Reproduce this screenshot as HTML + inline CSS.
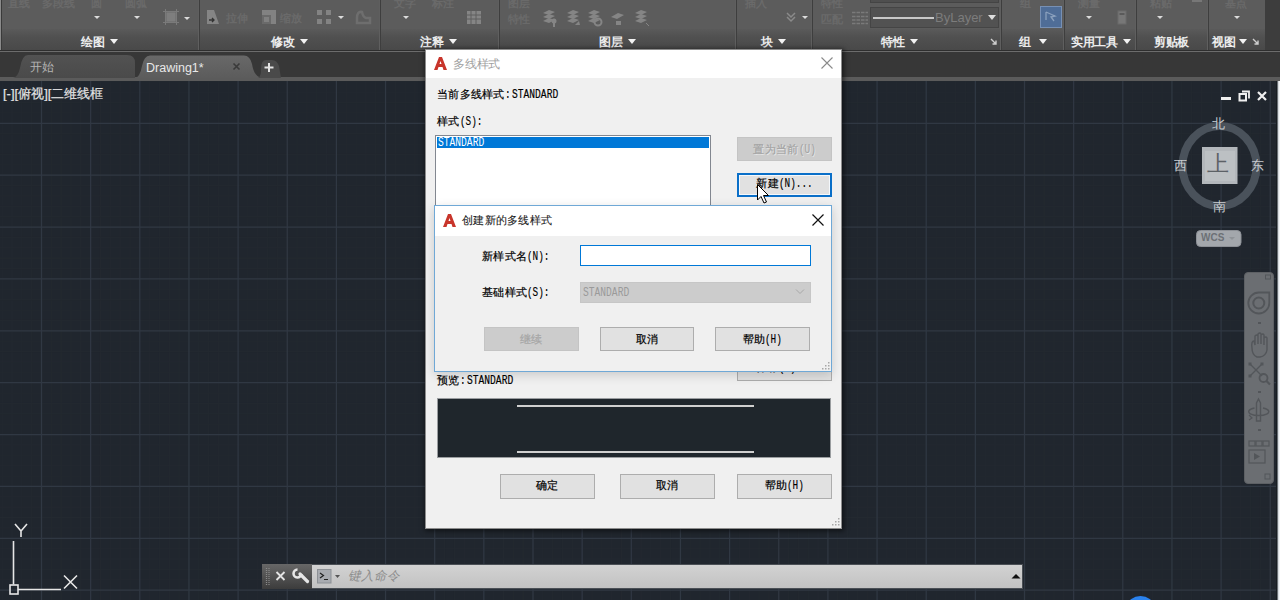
<!DOCTYPE html>
<html><head><meta charset="utf-8">
<style>
*{margin:0;padding:0;box-sizing:border-box}
html,body{width:1280px;height:600px;overflow:hidden;background:#20262e;font-family:"Liberation Sans",sans-serif}
div,span,svg{position:absolute}
.sep{top:0;width:2px;height:50px;border-left:1px solid #5f5f5f;border-right:1px solid #3e3e3e}
.pt{top:35px;font-size:12px;line-height:14px;color:#ededed;white-space:nowrap;font-weight:bold;letter-spacing:-0.5px}
.tri{width:0;height:0;border-left:4px solid transparent;border-right:4px solid transparent;border-top:5px solid #f2f2f2}
.stri{width:0;height:0;border-left:3px solid transparent;border-right:3px solid transparent;border-top:3px solid #dcdcdc}
.ft{font-size:11px;line-height:12px;color:#6a6a6a;white-space:nowrap;font-weight:bold}
.txt{font-size:11px;letter-spacing:0.3px;line-height:12px;color:#000;white-space:nowrap;-webkit-text-stroke:0.2px currentColor}
.m{position:static;display:inline-block;font-family:"Liberation Mono",monospace;font-size:13px;transform:scaleX(0.72);transform-origin:0 50%;-webkit-text-stroke:0.15px currentColor;letter-spacing:0}
.btn{background:#e1e1e1;border:1px solid #adadad;font-size:11px;letter-spacing:0.3px;line-height:22px;text-align:center;color:#000;white-space:nowrap;-webkit-text-stroke:0.2px currentColor}
.dis{background:#cccccc;border:1px solid #c4c4c4;color:#a6a6a6}
.mono{font-family:"Liberation Mono",monospace}
.ss{position:static;display:inline-block;font-family:"Liberation Mono",monospace;font-size:13px;transform:scaleX(0.74);transform-origin:0 50%;letter-spacing:0}
.ssn{position:static;font-family:"Liberation Mono",monospace;font-size:12.5px;letter-spacing:-1.6px}
</style></head><body>
<!-- RIBBON -->
<div style="left:0;top:0;width:1280px;height:52px;background:#3d3d3d"></div>
<div style="left:0;top:0;width:1265px;height:50px;background:#5c5c5c"></div>
<div style="left:0;top:29px;width:1265px;height:21px;background:linear-gradient(#5a5a5a,#505050 40%,#494949)"></div>
<div style="left:0;top:0;width:1px;height:51px;background:#8a8a8a"></div><div style="left:1px;top:0;width:1px;height:50px;background:#3a3a3a"></div>
<div style="left:0;top:50px;width:1280px;height:1px;background:#2e2e2e"></div>
<div style="left:0;top:51px;width:1280px;height:1px;background:#6c6c6c"></div>
<div class="sep" style="left:198px"></div>
<div class="sep" style="left:379px"></div>
<div class="sep" style="left:498px"></div>
<div class="sep" style="left:735px"></div>
<div class="sep" style="left:811px"></div>
<div class="sep" style="left:1000px"></div>
<div class="sep" style="left:1063px"></div>
<div class="sep" style="left:1135px"></div>
<div class="sep" style="left:1207px"></div>
<!-- panel titles -->
<span class="pt" style="left:81px">绘图</span><div class="tri" style="left:110px;top:39px"></div>
<span class="pt" style="left:271px">修改</span><div class="tri" style="left:300px;top:39px"></div>
<span class="pt" style="left:420px">注释</span><div class="tri" style="left:449px;top:39px"></div>
<span class="pt" style="left:599px">图层</span><div class="tri" style="left:628px;top:39px"></div>
<span class="pt" style="left:761px">块</span><div class="tri" style="left:778px;top:39px"></div>
<span class="pt" style="left:881px">特性</span><div class="tri" style="left:910px;top:39px"></div>
<span class="pt" style="left:1019px">组</span><div class="tri" style="left:1039px;top:39px"></div>
<span class="pt" style="left:1071px">实用工具</span><div class="tri" style="left:1123px;top:39px"></div>
<span class="pt" style="left:1154px">剪贴板</span>
<span class="pt" style="left:1212px">视图</span><div class="tri" style="left:1239px;top:39px"></div>
<svg style="left:990px;top:38px" width="8" height="8"><path d="M1 1L6 6M6 2.5V6H2.5" stroke="#cfcfcf" stroke-width="1.4" fill="none"/></svg>
<svg style="left:1252px;top:38px" width="8" height="8"><path d="M1 1L6 6M6 2.5V6H2.5" stroke="#cfcfcf" stroke-width="1.4" fill="none"/></svg>
<!-- faint ribbon icons -->
<span class="ft" style="left:8px;top:-3px">直线</span>
<span class="ft" style="left:42px;top:-3px">多段线</span>
<span class="ft" style="left:91px;top:-3px">圆</span>
<span class="ft" style="left:125px;top:-3px">圆弧</span>
<div class="stri" style="left:94px;top:16px"></div>
<div class="stri" style="left:134px;top:16px"></div>
<div class="stri" style="left:184px;top:17px"></div>
<svg style="left:162px;top:8px" width="18" height="18"><rect x="4" y="4" width="10" height="10" fill="#7e7e7e" stroke="#6a6a6a" stroke-width="1"/><path d="M1 3.5H17M1 14.5H17M3.5 1V17M14.5 1V17" stroke="#7a7a7a" stroke-width="1"/></svg>
<svg style="left:205px;top:9px" width="16" height="16"><path d="M2 1H9L14 15H2Z" fill="#858585"/><path d="M4 11H9M7 9L9 11L7 13" stroke="#333" stroke-width="1.3" fill="none"/></svg>
<span class="ft" style="left:226px;top:12px">拉伸</span>
<svg style="left:261px;top:9px" width="16" height="16"><path d="M1 1H15V15H1Z" fill="#828282"/><path d="M1 6H10V15H1Z" fill="#6a6a6a"/><path d="M3 8H8V13H3Z" fill="#808080"/></svg>
<span class="ft" style="left:280px;top:12px">缩放</span>
<svg style="left:316px;top:9px" width="16" height="16"><rect x="1" y="1" width="5" height="5" fill="#838383"/><rect x="10" y="1" width="5" height="5" fill="#838383"/><rect x="1" y="10" width="5" height="5" fill="#838383"/><rect x="10" y="10" width="5" height="5" fill="#838383"/></svg>
<div class="stri" style="left:338px;top:16px"></div>
<svg style="left:354px;top:9px" width="18" height="16"><path d="M3 14V9Q3 2 8 3Q9 8 12 9H16V14Z" fill="none" stroke="#6e6e6e" stroke-width="2.5"/></svg>
<span class="ft" style="left:394px;top:-3px">文字</span>
<div class="stri" style="left:403px;top:16px"></div>
<span class="ft" style="left:432px;top:-3px">标注</span>
<svg style="left:466px;top:10px" width="16" height="15"><rect x="1" y="1" width="14" height="13" fill="#858585"/><path d="M1 5H15M1 9H15M5 1V14M10 1V14" stroke="#5e5e5e" stroke-width="1"/></svg>
<span class="ft" style="left:508px;top:-5px;line-height:16px">图层<br>特性</span>
<svg style="left:540px;top:9px" width="140" height="18" fill="#858585"><path d="M3 4L9 1L15 3L9 6Z"/><path d="M3 8L9 5L15 7L9 10Z"/><path d="M3 12L9 9L15 11L9 14Z"/><circle cx="14" cy="12" r="2.5"/><rect x="13" y="13" width="2" height="5"/><path d="M27 4L33 1L39 3L33 6Z"/><path d="M27 8L33 5L39 7L33 10Z"/><path d="M27 12L33 9L39 11L33 14Z"/><path d="M35 16L39 12L40 16Z"/><path d="M48 4L54 1L60 3L54 6Z"/><path d="M48 8L54 5L60 7L54 10Z"/><path d="M48 12L54 9L60 11L54 14Z"/><circle cx="58" cy="13" r="3.5" fill="none" stroke="#858585" stroke-width="2"/><path d="M71 8L78 4L84 6L77 10Z"/><rect x="76" y="12" width="5" height="4"/><path d="M95 4L101 1L107 3L101 6Z"/><path d="M95 8L101 5L107 7L101 10Z"/><path d="M95 12L101 9L107 11L101 14Z"/><path d="M106 14L109 17" stroke="#858585"/></svg>
<span class="ft" style="left:745px;top:-3px">插入</span>
<svg style="left:786px;top:11px" width="10" height="12"><path d="M1 2L5 6L9 2M1 6L5 10L9 6" stroke="#8a8a8a" stroke-width="1.5" fill="none"/></svg>
<div class="stri" style="left:802px;top:16px"></div>
<span class="ft" style="left:821px;top:-5px;line-height:16px">特性<br>匹配</span>
<svg style="left:851px;top:11px" width="18" height="14"><path d="M1 1.5H17M1 5.5H17M1 9H17M1 12.5H17" stroke="#7a7a7a" stroke-width="1.4" stroke-dasharray="3.5 1"/></svg>
<div style="left:870px;top:-2px;width:129px;height:5px;background:#4f4f4f;border:1px solid #444"></div>
<div style="left:870px;top:7px;width:129px;height:21px;background:#525252;border:1px solid #454545"></div>
<div style="left:873px;top:17px;width:61px;height:2px;background:#c8c8c8"></div>
<span style="left:935px;top:11px;font-size:13px;line-height:14px;color:#7c7c7c;white-space:nowrap">ByLayer</span>
<div class="tri" style="left:988px;top:15px;border-top-color:#ddd"></div>
<span class="ft" style="left:1020px;top:-3px">组</span>
<div style="left:1040px;top:6px;width:22px;height:22px;background:#4f6d97;border:1px solid #7790b4"></div>
<svg style="left:1044px;top:10px" width="14" height="14"><path d="M2 2L11 6L7 7L10 11M2 2V10" stroke="#8aa0bd" stroke-width="1.3" fill="none"/></svg>
<span class="ft" style="left:1078px;top:-3px">测量</span>
<div class="stri" style="left:1086px;top:16px"></div>
<svg style="left:1117px;top:10px" width="10" height="15"><rect x="1" y="1" width="8" height="13" fill="#777" stroke="#6a6a6a"/><rect x="2.5" y="3" width="5" height="2" fill="#5a5a5a"/></svg>
<span class="ft" style="left:1150px;top:-3px">粘贴</span>
<div class="stri" style="left:1157px;top:16px"></div>
<div style="left:1192px;top:0px;width:10px;height:2px;background:#777"></div>
<span class="ft" style="left:1225px;top:-3px">基点</span>
<div class="stri" style="left:1234px;top:16px"></div>
<!-- TAB BAR -->
<div style="left:0;top:52px;width:1280px;height:29px;background:#373737"></div>
<div style="left:0;top:77px;width:1280px;height:4px;background:#5b5b5b"></div>
<svg style="left:0;top:52px" width="300" height="29">
  <defs>
    <linearGradient id="tg1" x1="0" y1="0" x2="0" y2="1"><stop offset="0" stop-color="#525252"/><stop offset="1" stop-color="#4a4a4a"/></linearGradient>
    <linearGradient id="tg2" x1="0" y1="0" x2="0" y2="1"><stop offset="0" stop-color="#686868"/><stop offset="1" stop-color="#5c5c5c"/></linearGradient>
  </defs>
  <path d="M13 26Q18 25 20 16Q22 3 28 3H127Q135 3 135 11V26Z" fill="url(#tg1)"/>
  <path d="M135 26Q140 25 142 14Q144 3.5 150 3.5H244Q250 3.5 252 12Q254 25 262 26Z" fill="url(#tg2)"/>
  <path d="M258 26Q261 25 261 17Q261 8 266 8H272Q277 8 279 14L281 26Z" fill="#4a4a4a"/>
  <path d="M269 11V20M264.5 15.5H273.5" stroke="#e4e4e4" stroke-width="2"/>
  <path d="M233.5 11.5L239.5 17.5M239.5 11.5L233.5 17.5" stroke="#3a3a3a" stroke-width="1.6"/>
</svg>
<span style="left:30px;top:60px;font-size:12px;line-height:14px;color:#b4b4b4;white-space:nowrap">开始</span>
<span style="left:146px;top:60px;font-size:12.5px;line-height:16px;color:#e8e8e8;white-space:nowrap">Drawing1*</span>
<!-- DRAWING AREA -->
<svg style="left:0;top:81px" width="1280" height="519">
<path d="M2.18 0V519M12.01 0V519M21.84 0V519M31.67 0V519M51.33 0V519M61.16 0V519M70.99 0V519M80.82 0V519M100.48 0V519M110.31 0V519M120.14 0V519M129.97 0V519M149.63 0V519M159.46 0V519M169.29 0V519M179.12 0V519M198.78 0V519M208.61 0V519M218.44 0V519M228.27 0V519M247.93 0V519M257.76 0V519M267.59 0V519M277.42 0V519M297.08 0V519M306.91 0V519M316.74 0V519M326.57 0V519M346.23 0V519M356.06 0V519M365.89 0V519M375.72 0V519M395.38 0V519M405.21 0V519M415.04 0V519M424.87 0V519M444.53 0V519M454.36 0V519M464.19 0V519M474.02 0V519M493.68 0V519M503.51 0V519M513.34 0V519M523.17 0V519M542.83 0V519M552.66 0V519M562.49 0V519M572.32 0V519M591.98 0V519M601.81 0V519M611.64 0V519M621.47 0V519M641.13 0V519M650.96 0V519M660.79 0V519M670.62 0V519M690.28 0V519M700.11 0V519M709.94 0V519M719.77 0V519M739.43 0V519M749.26 0V519M759.09 0V519M768.92 0V519M788.58 0V519M798.41 0V519M808.24 0V519M818.07 0V519M837.73 0V519M847.56 0V519M857.39 0V519M867.22 0V519M886.88 0V519M896.71 0V519M906.54 0V519M916.37 0V519M936.03 0V519M945.86 0V519M955.69 0V519M965.52 0V519M985.18 0V519M995.01 0V519M1004.84 0V519M1014.67 0V519M1034.33 0V519M1044.16 0V519M1053.99 0V519M1063.82 0V519M1083.48 0V519M1093.31 0V519M1103.14 0V519M1112.97 0V519M1132.63 0V519M1142.46 0V519M1152.29 0V519M1162.12 0V519M1181.78 0V519M1191.61 0V519M1201.44 0V519M1211.27 0V519M1230.93 0V519M1240.76 0V519M1250.59 0V519M1260.42 0V519M1280.08 0V519M0 0.80H1280M0 11.18H1280M0 21.55H1280M0 31.93H1280M0 52.67H1280M0 63.05H1280M0 73.42H1280M0 83.80H1280M0 104.54H1280M0 114.92H1280M0 125.29H1280M0 135.67H1280M0 156.41H1280M0 166.79H1280M0 177.16H1280M0 187.54H1280M0 208.28H1280M0 218.66H1280M0 229.03H1280M0 239.41H1280M0 260.15H1280M0 270.53H1280M0 280.90H1280M0 291.28H1280M0 312.02H1280M0 322.40H1280M0 332.77H1280M0 343.15H1280M0 363.89H1280M0 374.27H1280M0 384.64H1280M0 395.02H1280M0 415.76H1280M0 426.14H1280M0 436.51H1280M0 446.89H1280M0 467.63H1280M0 478.01H1280M0 488.38H1280M0 498.76H1280M0 519.50H1280" stroke="#232930" stroke-width="1"/>
<path d="M41.50 0V519M90.65 0V519M139.80 0V519M188.95 0V519M238.10 0V519M287.25 0V519M336.40 0V519M385.55 0V519M434.70 0V519M483.85 0V519M533.00 0V519M582.15 0V519M631.30 0V519M680.45 0V519M729.60 0V519M778.75 0V519M827.90 0V519M877.05 0V519M926.20 0V519M975.35 0V519M1024.50 0V519M1073.65 0V519M1122.80 0V519M1171.95 0V519M1221.10 0V519M1270.25 0V519M0 42.30H1280M0 94.17H1280M0 146.04H1280M0 197.91H1280M0 249.78H1280M0 301.65H1280M0 353.52H1280M0 405.39H1280M0 457.26H1280M0 509.13H1280" stroke="#303843" stroke-width="1.25"/>
</svg>
<div style="left:1276px;top:81px;width:4px;height:519px;background:linear-gradient(to right,#181d22 0,#181d22 25%,#9aa2a8 45%,#f2f5f8 70%)"></div>
<span style="left:3px;top:87px;font-size:13px;line-height:14px;color:#e4e4e4;white-space:nowrap;-webkit-text-stroke:0.2px #e4e4e4">[-][俯视][二维线框</span>
<!-- window controls -->
<div style="left:1221px;top:97px;width:10px;height:3px;background:#f0f0f0"></div>
<svg style="left:1238px;top:90px" width="13" height="12"><path d="M4 1.5H11V8.5" stroke="#f0f0f0" stroke-width="1.8" fill="none"/><rect x="1.5" y="4" width="6.5" height="6.5" stroke="#f0f0f0" stroke-width="2" fill="none"/></svg>
<svg style="left:1256px;top:90px" width="12" height="12"><path d="M2 2L10 10M10 2L2 10" stroke="#f0f0f0" stroke-width="2.2"/></svg>
<!-- viewcube -->
<svg style="left:1170px;top:115px" width="100" height="140">
  <ellipse cx="49.5" cy="51" rx="37" ry="40" fill="none" stroke="#4a525b" stroke-width="8"/>
  <rect x="32" y="32" width="35.5" height="37" fill="#b3b7bb"/>
  <rect x="35" y="36" width="30" height="30" fill="#bcc0c3"/>
  <rect x="26.5" y="115.5" width="44.5" height="16" rx="4" fill="#a3a7ac" stroke="#8c9096"/>
</svg>
<span style="left:1212px;top:117px;font-size:13px;line-height:14px;color:#c8ccd0">北</span>
<span style="left:1213px;top:200px;font-size:13px;line-height:14px;color:#c8ccd0">南</span>
<span style="left:1174px;top:159px;font-size:13px;line-height:14px;color:#c8ccd0">西</span>
<span style="left:1251px;top:159px;font-size:13px;line-height:14px;color:#c8ccd0">东</span>
<span style="left:1207px;top:152px;font-size:22px;line-height:24px;color:#5c6166">上</span>
<span style="left:1201px;top:232px;font-size:10px;line-height:12px;color:#6c7075;font-weight:bold">WCS</span>
<div class="stri" style="left:1229px;top:237px;border-top-color:#8f9398"></div>
<!-- nav bar -->
<div style="left:1244px;top:272px;width:30px;height:212px;background:#6b6e72;border-radius:4px;border:1px solid #5d6064"></div>
<svg style="left:1244px;top:272px" width="31" height="212" fill="none" stroke="#53565a" stroke-width="1.6">
  <rect x="21.5" y="3" width="5" height="4" stroke-width="1"/>
  <path d="M14.8 20.5H25.3V31A10.5 10.5 0 1 1 14.8 20.5Z" stroke-width="1.8"/>
  <circle cx="14.8" cy="31" r="5.5" stroke-width="2"/>
  <path d="M14 51H17" stroke-width="2"/>
  <path d="M8 76Q7 69 10 69L11 73V64Q13 62 14 64V72V62Q16 60 17 62V72V63Q19 61 20 63V73V66Q22 64 23 66V78Q22 84 16 85H13Q8 83 8 76Z" stroke-width="1.4"/>
  <path d="M6 92L18 104M18 92L6 104" stroke-width="1.4"/>
  <rect x="4.5" y="90.5" width="3" height="3" fill="#53565a" stroke="none"/><rect x="16.5" y="90.5" width="3" height="3" fill="#53565a" stroke="none"/><rect x="4.5" y="102.5" width="3" height="3" fill="#53565a" stroke="none"/>
  <circle cx="19.5" cy="106" r="4" stroke-width="1.8"/>
  <path d="M22.5 109L26 112.5" stroke-width="2.2"/>
  <path d="M14 120H17" stroke-width="2"/>
  <path d="M12.5 149V131L14.5 127L16.5 131V149Z" stroke-width="1.4"/>
  <path d="M10.5 136A10 4 0 1 0 19 136" stroke-width="1.5"/>
  <path d="M5 143L8 146L5 148" stroke-width="1.2"/>
  <path d="M14 158H17" stroke-width="2"/>
  <rect x="5" y="169" width="6" height="5" stroke-width="1.2"/>
  <rect x="12" y="169" width="6" height="5" stroke-width="1.2"/>
  <rect x="19" y="169" width="6" height="5" stroke-width="1.2"/>
  <rect x="5" y="178" width="16" height="13" stroke-width="1.2"/>
  <path d="M10 181V188L16 184.5Z" fill="#53565a" stroke="none"/>
  <rect x="21" y="202" width="5" height="5" stroke-width="1"/>
</svg>
<!-- UCS -->
<svg style="left:0;top:515px" width="90" height="85" fill="none" stroke="#e6e6e6" stroke-width="1.6">
  <path d="M15 9L21 16L27 9M21 16V22"/>
  <path d="M13.5 26V69.5"/>
  <rect x="10" y="70" width="8" height="9"/>
  <path d="M18 74.5H61"/>
  <path d="M64 60.5L77 73.5M77 60.5L64 73.5"/>
</svg>
<!-- command line -->
<div style="left:262px;top:564px;width:761px;height:25px;background:linear-gradient(#d2d2d2,#c2c2c2);border:1px solid #4a4f55"></div>
<div style="left:262px;top:564px;width:50px;height:25px;background:linear-gradient(#676767,#3c3c3c)"></div>
<svg style="left:262px;top:564px" width="140" height="25">
  <path d="M4.5 4V21M7 4V21" stroke="#8a8a8a" stroke-width="1.2" stroke-dasharray="1 1"/>
  <path d="M14.5 8L22.5 16M22.5 8L14.5 16" stroke="#e4e4e4" stroke-width="1.8"/>
  <path d="M35.5 5.5A4 4 0 1 0 39.5 10" stroke="#e6e6e6" stroke-width="2.6" fill="none"/><path d="M38 10L45.5 17.5" stroke="#e6e6e6" stroke-width="3.2" stroke-linecap="round"/>
  <rect x="55.5" y="5.5" width="13.5" height="13.5" fill="#a8abb0" stroke="#8d9196"/>
  <path d="M58 9L61.5 11.5L58 14M62 15.5H66" stroke="#222" stroke-width="1.2" fill="none"/>
  <path d="M73 11H78L75.5 14Z" fill="#555"/>
</svg>
<span style="left:348px;top:569px;font-size:12.5px;line-height:14px;color:#8c8c8c;font-style:italic;white-space:nowrap">键入命令</span>
<svg style="left:1010px;top:572px" width="12" height="8"><path d="M1.5 6.5H10.5L6 2Z" fill="#111"/></svg>
<!-- blue circle bottom -->
<svg style="left:1120px;top:590px" width="40" height="10"><ellipse cx="20.5" cy="16" rx="13" ry="10" fill="#2a82ee"/></svg>
<!-- DIALOG 1 -->
<div style="left:425px;top:49px;width:417px;height:480px;box-shadow:1px 1px 5px 1px rgba(0,0,0,0.55)"></div>
<div style="left:425px;top:49px;width:417px;height:480px;background:#f0f0f0;border:1px solid #8d8d8d"></div>
<div style="left:426px;top:50px;width:415px;height:28px;background:#ffffff"></div>
<svg style="left:433px;top:56px" width="15" height="15"><path d="M1 14L6 1H9L14 14H10.5L9.5 11H5.5L4.5 14Z M6.5 8H8.5L7.5 5Z" fill="#c8352b" fill-rule="evenodd"/></svg>
<span class="txt" style="left:453px;top:58px;color:#a0a0a0;-webkit-text-stroke:0;font-size:12px;letter-spacing:-0.2px">多线样式</span>
<svg style="left:820px;top:56px" width="14" height="14"><path d="M1.5 1.5L12.5 12.5M12.5 1.5L1.5 12.5" stroke="#8a8a8a" stroke-width="1.1"/></svg>
<span class="txt" style="left:437px;top:88px">当前多线样式<span class="m" style="margin-right:-1.2px;margin-left:0.5px">:</span><span class="ss">STANDARD</span></span>
<span class="txt" style="left:437px;top:115px">样式<span class="m" style="margin-right:-8.8px">(S):</span></span>
<div style="left:435px;top:135px;width:276px;height:90px;background:#fff;border:1px solid #828790"></div>
<div style="left:437px;top:137px;width:272px;height:11px;background:#0078d7"></div>
<span class="ss" style="position:absolute;left:438px;top:136px;line-height:13px;color:#fff">STANDARD</span>
<div class="btn dis" style="left:737px;top:137px;width:95px;height:24px;color:#a4a4a4;text-shadow:1px 1px 0 #e8e8e8">置为当前<span class="m" style="margin-right:-6.6px">(U)</span></div>
<div class="btn" style="left:737px;top:173px;width:95px;height:24px;border:2px solid #0a6fc8;line-height:16px;box-shadow:inset 0 0 0 1px #f4f8fc">新建<span class="m" style="margin-right:-13.2px">(N)...</span></div>
<div class="btn" style="left:737px;top:357px;width:95px;height:24px;line-height:19px">保存<span class="m" style="margin-right:-13.2px">(A)...</span></div>
<span class="txt" style="left:437px;top:374px">预览<span class="m" style="margin-right:-1.2px;margin-left:0.5px">:</span><span class="ss">STANDARD</span></span>
<div style="left:437px;top:398px;width:394px;height:60px;background:#1f262c;border:1px solid #9a9da0"></div>
<div style="left:517px;top:405px;width:237px;height:2px;background:#cfcfcf"></div>
<div style="left:517px;top:451px;width:237px;height:2px;background:#cfcfcf"></div>
<div class="btn" style="left:500px;top:474px;width:95px;height:25px;line-height:20px">确定</div>
<div class="btn" style="left:620px;top:474px;width:95px;height:25px;line-height:20px">取消</div>
<div class="btn" style="left:737px;top:474px;width:95px;height:25px;line-height:20px">帮助<span class="m" style="margin-right:-6.6px">(H)</span></div>
<svg style="left:832px;top:518px" width="9" height="9" fill="#a8a8a8"><rect x="6" y="0" width="1.5" height="1.5"/><rect x="3" y="3" width="1.5" height="1.5"/><rect x="6" y="3" width="1.5" height="1.5"/><rect x="0" y="6" width="1.5" height="1.5"/><rect x="3" y="6" width="1.5" height="1.5"/><rect x="6" y="6" width="1.5" height="1.5"/></svg>
<!-- cursor -->
<svg style="left:756px;top:183px" width="16" height="22"><path d="M1.5 1.5V17L5 13.5L8 20L10.5 19L7.5 12.5H12.5Z" fill="#fff" stroke="#000" stroke-width="1"/></svg>
<!-- DIALOG 2 -->
<div style="left:434px;top:205px;width:398px;height:167px;box-shadow:0 3px 10px rgba(0,0,0,0.16)"></div>
<div style="left:434px;top:205px;width:398px;height:167px;background:#f0f0f0;border:1px solid #6fa8d6"></div>
<div style="left:435px;top:206px;width:396px;height:30px;background:#ffffff"></div>
<svg style="left:442px;top:213px" width="15" height="15"><path d="M1 14L6 1H9L14 14H10.5L9.5 11H5.5L4.5 14Z M6.5 8H8.5L7.5 5Z" fill="#c8352b" fill-rule="evenodd"/></svg>
<span class="txt" style="left:462px;top:214px;color:#1a1a1a;-webkit-text-stroke:0.1px #1a1a1a">创建新的多线样式</span>
<svg style="left:811px;top:213px" width="14" height="14"><path d="M1.5 1.5L12.5 12.5M12.5 1.5L1.5 12.5" stroke="#111" stroke-width="1.2"/></svg>
<span class="txt" style="left:482px;top:250px">新样式名<span class="m" style="margin-right:-8.8px">(N):</span></span>
<div style="left:580px;top:245px;width:231px;height:21px;background:#fff;border:1px solid #0078d7"></div>
<span class="txt" style="left:482px;top:286px">基础样式<span class="m" style="margin-right:-8.8px">(S):</span></span>
<div style="left:580px;top:282px;width:231px;height:21px;background:#cccccc;border:1px solid #c6c6c6"></div>
<span class="ss" style="position:absolute;left:583px;top:286px;line-height:13px;color:#9a9a9a">STANDARD</span>
<svg style="left:795px;top:288px" width="10" height="7"><path d="M1 1.5L5 5.5L9 1.5" stroke="#a8a8a8" stroke-width="1" fill="none"/></svg>
<div class="btn dis" style="left:484px;top:327px;width:95px;height:24px">继续</div>
<div class="btn" style="left:600px;top:327px;width:94px;height:24px">取消</div>
<div class="btn" style="left:715px;top:327px;width:95px;height:24px">帮助<span class="m" style="margin-right:-6.6px">(H)</span></div>
<svg style="left:822px;top:362px" width="9" height="9" fill="#a8a8a8"><rect x="6" y="0" width="1.5" height="1.5"/><rect x="3" y="3" width="1.5" height="1.5"/><rect x="6" y="3" width="1.5" height="1.5"/><rect x="0" y="6" width="1.5" height="1.5"/><rect x="3" y="6" width="1.5" height="1.5"/><rect x="6" y="6" width="1.5" height="1.5"/></svg>
</body></html>
